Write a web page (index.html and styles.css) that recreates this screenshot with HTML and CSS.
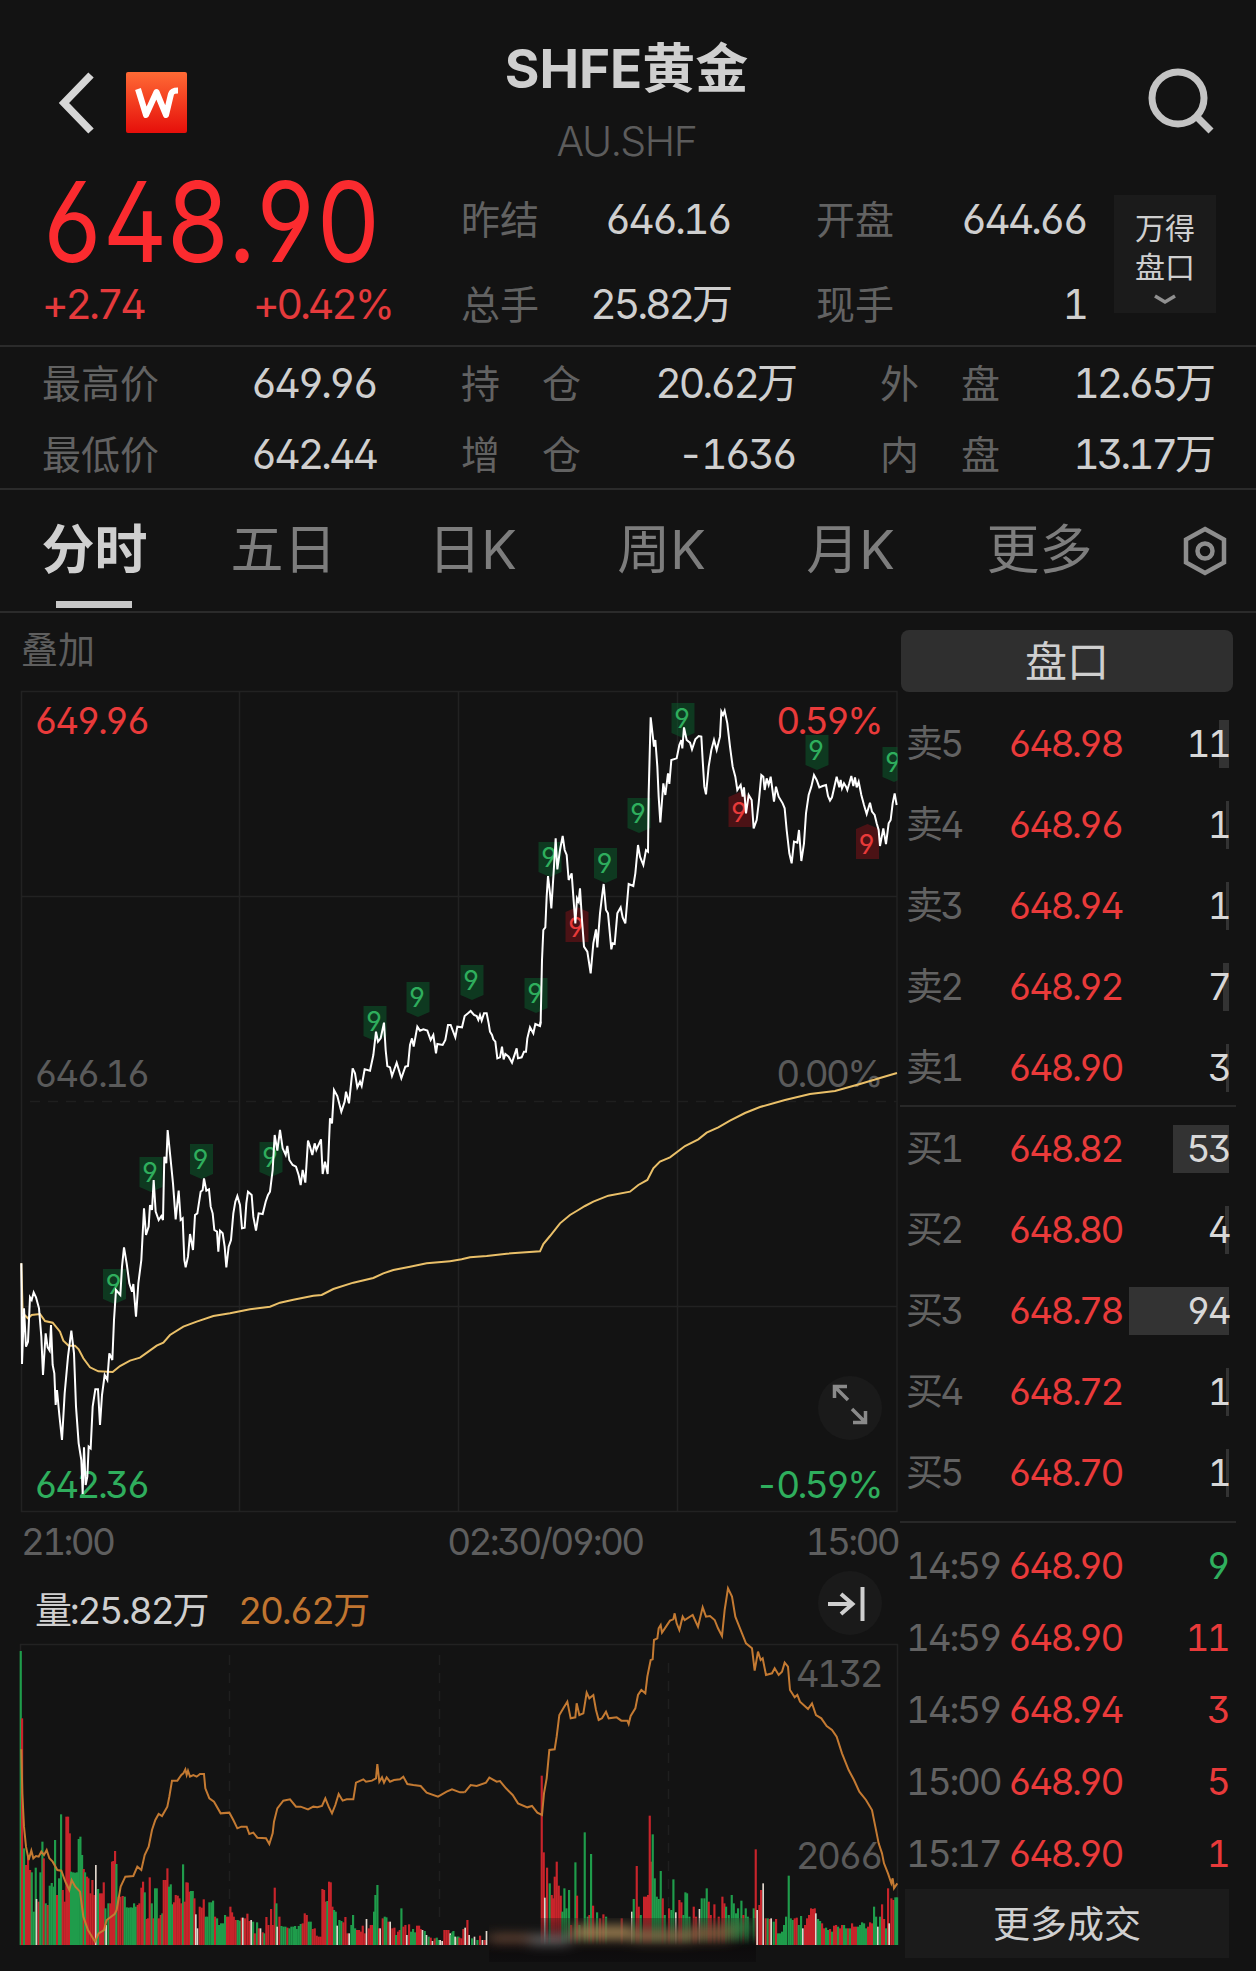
FILE: index.html
```html
<!DOCTYPE html>
<html lang="zh-CN">
<head>
    <meta charset="UTF-8">
    <meta name="viewport" content="width=device-width, initial-scale=1.0">
    <title>SHFE黄金</title>
    <link rel="stylesheet" href="styles.css">
</head>
<body>
    <header class="topbar">
        <div class="topbar-left">
            <svg class="back" width="36" height="62" viewBox="0 0 36 62"><path d="M33 3L6 31L33 59"/></svg>
            <svg class="logo" width="61" height="61" viewBox="0 0 61 61">
                <defs>
                    <linearGradient id="logoBg" x1="0" y1="0" x2="0" y2="1">
                        <stop offset="0" stop-color="#ff6a35"/>
                        <stop offset="1" stop-color="#e60f0a"/>
                    </linearGradient>
                </defs>
                <rect width="61" height="61" rx="2" fill="url(#logoBg)"/>
                <path d="M12 17L20 43L30.500 20L40 43L45 22Q46 18.500 52 18.500"/>
            </svg>
        </div>
        <div class="topbar-title">
            <h1>SHFE黄金</h1>
            <p>AU.SHF</p>
        </div>
        <svg class="search" width="70" height="70" viewBox="0 0 70 70"><circle cx="31" cy="31" r="26"/><path d="M50 50L64 64"/></svg>
    </header>

    <section class="quote">
        <div class="last">
            <div class="last-price">648.90</div>
            <div class="last-change"><span>+2.74</span><span>+0.42%</span></div>
        </div>
        <dl class="quote-col">
            <div><dt>昨结</dt><dd>646.16</dd></div>
            <div><dt>总手</dt><dd>25.82万</dd></div>
        </dl>
        <dl class="quote-col second">
            <div><dt>开盘</dt><dd>644.66</dd></div>
            <div><dt>现手</dt><dd>1</dd></div>
        </dl>
        <button class="wind">
            <span>万得</span>
            <span>盘口</span>
            <svg width="24" height="14" viewBox="0 0 24 14"><path d="M2 3L12 9L22 3"/></svg>
        </button>
    </section>

    <section class="stats">
        <dl class="stat-a">
            <div><dt>最高价</dt><dd>649.96</dd></div>
            <div><dt>最低价</dt><dd>642.44</dd></div>
        </dl>
        <dl class="stat-b">
            <div><dt><i>持</i><i>仓</i></dt><dd>20.62万</dd></div>
            <div><dt><i>增</i><i>仓</i></dt><dd>-1636</dd></div>
        </dl>
        <dl class="stat-c">
            <div><dt><i>外</i><i>盘</i></dt><dd>12.65万</dd></div>
            <div><dt><i>内</i><i>盘</i></dt><dd>13.17万</dd></div>
        </dl>
    </section>

    <nav class="tabs">
        <a class="active">分时</a>
        <a>五日</a>
        <a>日K</a>
        <a>周K</a>
        <a>月K</a>
        <a>更多</a>
        <svg width="44" height="50" viewBox="0 0 44 50"><path d="M22 3L41 13.500V36.500L22 47L3 36.500V13.500Z"/><circle cx="22" cy="25" r="7.500"/></svg>
    </nav>

    <main class="main">
        <div class="charts">
            <div class="overlay-label">叠加</div>

            <!-- 分时图 -->
            <svg class="price-chart" width="900" height="840" viewBox="0 680 900 840">
                <defs>
                    <clipPath id="plot"><rect x="20" y="690" width="877.500" height="824"/></clipPath>
                    <path id="down" d="M-11.500 0H11.500V30L0 35L-11.500 30Z"/>
                    <path id="up" d="M-11.500 35H11.500V5L0 0L-11.500 5Z"/>
                </defs>
                <g class="grid">
                    <path d="M21.500 691.500H897V1511.500H21.500ZM239.500 691.500V1511.500M458.500 691.500V1511.500M677.500 691.500V1511.500M21.500 896.500H897M21.500 1306.500H897"/>
                    <path class="dashed" d="M30 1101.500H897"/>
                </g>
                <g class="labels">
                    <text class="red" x="34" y="734">649.96</text>
                    <text class="grey" x="34" y="1087">646.16</text>
                    <text class="green" x="34" y="1498">642.36</text>
                    <text class="red end" x="881" y="734">0.59%</text>
                    <text class="grey end" x="881" y="1087">0.00%</text>
                    <text class="green end" x="881" y="1498">-0.59%</text>
                </g>
                <g id="marks" clip-path="url(#plot)"></g>
                <g class="avg">
                    <polyline transform="translate(0 1060) scale(.33333)" points="64,610 68,760 84,775 95,765 120,762 135,783 158,788 180,815 190,842 206,857 225,857 236,868 250,895 270,922 295,934 338,936 360,918 390,902 420,893 445,875 470,857 490,848 510,825 550,800 590,785 640,768 690,760 750,748 810,740 840,728 880,719 940,707 965,705 1000,687 1060,668 1120,654 1150,640 1180,630 1230,620 1280,610 1350,604"/>
                    <polyline transform="translate(330 930) scale(.33333)" points="360,994 395,988 420,982 470,978 530,971 630,964 640,942 660,918 690,880 720,855 745,840 765,828 790,815 835,797 900,785 925,765 952,750 970,715 990,695 1020,682 1065,648 1105,628 1130,608 1165,592 1200,572 1245,549 1290,531 1365,510 1440,492 1515,483 1590,462 1650,444 1701,429"/>
                </g>
                <g class="price">
                    <polyline transform="translate(0 1060) scale(.33333)" points="64,610 66,912 72,745 78,860 84,845 90,712 95,720 101,697 108,712 117,745 124,830 129,945 137,820 143,862 149,872 153,795 158,915 163,940 167,1035 171,990 178,1065 186,1140 194,1000 204,890 214,812 222,880 228,1040 236,1150 244,1200 248,1302 252,1162 257,1275 262,1250 266,1160 272,1165 278,1040 286,988 294,988 300,1095 306,1005 314,945 322,960 328,880 337,900 342,780 348,690 361,705 366,620 372,562 380,610 388,670 396,695 400,672 408,770 415,670 424,600 432,445 438,525 446,500 450,435 456,450 461,360 467,455 476,480 484,468 489,480 493,290 499,310 503,210 511,290 519,370 527,478 536,392 542,480 548,475 553,600 557,622 564,590 570,522 579,570 585,465 592,460 602,395 608,390 612,355 619,392 627,388 632,440 638,460 643,510 651,515 655,575 660,512 668,520 674,560 679,622 686,560 693,540 700,460 706,425 712,408 720,435 726,505 734,503 739,430 744,395 755,405 760,470 768,512 776,460 788,462 797,425 804,405 810,395 818,330 824,225 832,272 840,210 848,265 857,285 862,258 868,300 878,315 888,320 896,345 902,375 908,330 916,368 924,242 930,260 937,285 944,250 949,270 963,238 968,342 975,305 983,342 990,175 996,190 1002,90 1012,108 1024,155 1034,125 1038,95 1047,130 1058,25"/>
                    <polyline transform="translate(330 930) scale(.33333)" points="68,415 75,430 82,472 90,455 95,468 104,418 120,422 130,375 138,305 144,335 152,325 162,278 167,360 172,408 180,412 186,438 200,398 214,445 226,410 234,408 240,345 246,325 251,350 262,290 270,302 280,298 292,302 302,330 310,315 318,370 322,342 338,345 346,330 354,285 362,285 376,322 382,290 396,292 404,258 414,250 422,243 432,255 440,258 445,270 450,255 455,272 462,250 470,250 476,280 480,305 486,315 490,328 496,335 502,385 510,382 516,350 521,388 526,372 536,380 546,398 560,355 564,385 575,382 582,365 588,365 592,325 600,292 610,310 616,282 630,288 632,275"/>
                    <polyline transform="translate(500 680) scale(.33333)" points="120,1038 122,1025 126,840 130,750 136,742 140,650 144,588 150,640 154,685 162,560 167,475 172,568 180,510 188,468 194,510 200,525 206,600 215,580 220,650 226,730 231,655 236,665 240,625 246,720 252,800 262,815 272,880 280,790 288,748 292,802 300,700 306,650 311,612 318,690 324,700 334,808 338,790 344,792 352,700 362,682 368,712 376,730 386,612 400,618 406,580 414,495 420,530 430,555 438,510 444,515 446,340 452,112 462,200 466,180 472,260 476,350 481,427 490,310 496,345 504,280 508,312 514,240 530,235 538,195 544,180 547,205 552,142 560,180 570,188 576,208 586,178 596,168 604,170 608,240 613,320 618,343 626,260 634,210 642,180 650,210 660,170 664,95 669,105 674,92 682,130 690,200 698,260 706,290 712,330 722,315 728,350 732,322 738,400 746,345 755,360 761,445 770,420 776,370 784,285 790,290 794,330 800,295 806,315 812,290 822,365 828,320 836,350 848,370 854,385 860,450 868,520 875,550 882,485 892,488 897,450 904,543 912,490 918,400 926,345 934,320 942,285 950,300 958,322 968,318 978,315 984,348 990,362 996,352 1010,290 1018,322 1022,300 1026,325 1032,310 1038,320 1042,330 1048,310 1054,288 1060,318 1065,292 1070,322 1076,305 1084,345 1092,375 1100,402 1110,368 1116,395 1124,405 1130,430 1136,450 1140,498 1150,445 1158,492 1166,430 1172,420 1178,370 1184,340 1190,375"/>
                </g>
                <circle class="round" cx="850" cy="1408" r="32"/>
                <path class="expand" d="M848 1400L835 1387M834.500 1398V1386.500H847M852 1409L865 1422M865.500 1411V1422.500H853"/>
            </svg>

            <div class="time-axis"><span>21:00</span><span class="mid">02:30/09:00</span><span>15:00</span></div>

            <div class="volume-head">
                <span>量:25.82万</span>
                <span class="orange">20.62万</span>
                <svg width="66" height="66" viewBox="0 0 66 66"><circle class="round" cx="33" cy="33" r="32"/><path class="jump" d="M11 34H35M24 24L35.500 34L24 44"/><path class="jump-bar" d="M45.500 17V51"/></svg>
            </div>

            <!-- 成交量 + 持仓 -->
            <svg class="volume-chart" width="900" height="331" viewBox="0 1640 900 331">
                <defs>
                    <filter id="smear" x="-10%" y="-60%" width="120%" height="220%"><feGaussianBlur stdDeviation="7 6"/></filter>
                    <linearGradient id="fade" x1="0" y1="0" x2="0" y2="1">
                        <stop offset="0" stop-color="#131313" stop-opacity=".3"/>
                        <stop offset=".4" stop-color="#131211" stop-opacity=".65"/>
                        <stop offset=".62" stop-color="#0d0b0c"/>
                        <stop offset="1" stop-color="#0f0e0f"/>
                    </linearGradient>
                    <clipPath id="smearClip"><rect x="489" y="1918" width="267" height="44"/></clipPath>
                </defs>
                <g class="grid">
                    <path d="M20.500 1945V1644.500H897.500V1945"/>
                    <path class="dashed" d="M229.500 1655V1920M439.500 1655V1920M668.500 1663V1920"/>
                </g>
                <g class="labels">
                    <text class="grey end" x="881" y="1687">4132</text>
                    <text class="grey end" x="881" y="1869">2066</text>
                </g>
                <g id="bars" transform="translate(0 1945) scale(.33333 -.33333)"></g>
                <g clip-path="url(#smearClip)">
                    <rect x="489" y="1918" width="267" height="44" fill="url(#fade)"/>
                    <g filter="url(#smear)">
                        <rect x="489" y="1936" width="46" height="5" fill="#a06a50"/>
                        <rect x="530" y="1936" width="40" height="8" fill="#777"/>
                        <rect x="572" y="1926" width="60" height="13" fill="#a08253"/>
                        <rect x="632" y="1930" width="60" height="11" fill="#8c6f4c"/>
                        <rect x="692" y="1926" width="38" height="14" fill="#7e5a3c"/>
                        <rect x="730" y="1920" width="20" height="16" fill="#2d7a3f"/>
                    </g>
                </g>
                <polyline class="oi" transform="translate(0 1560) scale(.33333)" points="64,568 67,700 72,800 78,860 86,900 94,872 100,895 108,888 116,890 124,875 132,885 140,870 148,895 158,905 172,930 184,932 196,965 208,990 215,960 226,980 240,995 250,1070 264,1110 285,1145 296,1120 312,1110 320,1080 344,1062 350,1050 362,980 376,950 400,948 412,920 424,930 434,885 446,860 456,810 466,780 476,762 486,768 502,740 508,710 516,662 532,662 544,645 550,640 556,628 560,645 564,632 570,650 580,645 590,650 600,642 612,642 616,685 628,715 642,725 662,760 688,758 700,780 712,805 724,800 740,800 748,822 760,818 772,833 798,835 808,852 818,820 822,785 832,745 850,722 870,718 888,740 902,740 924,748 940,740 952,742 966,738 976,715 986,740 996,760 1006,735 1016,702 1028,722 1040,718 1060,718 1068,668 1090,658 1098,665 1116,662 1128,655 1132,612 1138,665 1146,652 1152,668 1160,652 1170,665 1182,660 1200,658 1210,650 1222,672 1240,675 1262,678 1280,698 1314,710 1340,695 1356,688 1380,697 1394,697"/>
                <polyline class="oi" transform="translate(450 1560) scale(.33333)" points="44,697 62,675 80,678 108,668 118,653 140,665 150,663 168,685 188,705 204,730 232,742 246,738 262,758 276,765 282,700 290,655 298,570 314,568 320,530 328,465 340,445 352,425 362,475 376,472 380,430 388,465 400,460 410,398 418,415 430,405 438,450 446,480 456,475 468,455 476,475 500,472 514,482 532,482 536,492 542,468 556,445 564,405 574,390 586,400 592,350 602,300 608,298 612,240 622,235 626,205 632,195 636,218 648,200 660,182 670,178 674,160 680,190 688,210 698,170 704,180 728,165 744,200 758,142 768,170 780,168 794,180 804,205 816,228 824,150 834,85 846,110 856,170 870,205 888,250 906,265 914,332 924,275 932,300 938,295 948,345 966,340 974,325 986,345 996,335 1004,308 1014,320 1020,390 1034,412 1042,405 1050,425 1074,447 1086,430 1098,465 1114,475 1130,498 1146,510 1160,530 1176,580 1196,630 1212,660 1228,695 1248,720 1266,750 1276,800 1286,850 1296,880 1302,910 1314,940 1324,970 1328,955 1332,985 1342,970"/>
            </svg>
        </div>

        <aside class="book">
            <div class="book-tab">盘口</div>
            <ul class="levels asks">
                <li><span>卖5</span><b>648.98</b><em>11<i style="width: 10px"></i></em></li>
                <li><span>卖4</span><b>648.96</b><em>1<i style="width: 3px"></i></em></li>
                <li><span>卖3</span><b>648.94</b><em>1<i style="width: 3px"></i></em></li>
                <li><span>卖2</span><b>648.92</b><em>7<i style="width: 6px"></i></em></li>
                <li><span>卖1</span><b>648.90</b><em>3<i style="width: 3px"></i></em></li>
            </ul>
            <ul class="levels bids">
                <li><span>买1</span><b>648.82</b><em>53<i style="width: 56px"></i></em></li>
                <li><span>买2</span><b>648.80</b><em>4<i style="width: 4px"></i></em></li>
                <li><span>买3</span><b>648.78</b><em>94<i style="width: 100px"></i></em></li>
                <li><span>买4</span><b>648.72</b><em>1<i style="width: 3px"></i></em></li>
                <li><span>买5</span><b>648.70</b><em>1<i style="width: 3px"></i></em></li>
            </ul>
            <ul class="trades">
                <li><span>14:59</span><b>648.90</b><em class="green">9</em></li>
                <li><span>14:59</span><b>648.90</b><em>11</em></li>
                <li><span>14:59</span><b>648.94</b><em>3</em></li>
                <li><span>15:00</span><b>648.90</b><em>5</em></li>
                <li><span>15:17</span><b>648.90</b><em>1</em></li>
            </ul>
            <button class="more">更多成交</button>
        </aside>
    </main>

    <script src="script.js"></script>
</body>
</html>
```
FILE: styles.css
```css
* {
    margin: 0;
    padding: 0;
    box-sizing: border-box;
}

body {
    width: 1256px;
    height: 1971px;
    overflow: hidden;
    background-color: #131313;
    color: #cfcfcf;
    font-family: Inter, "Noto Sans CJK SC", sans-serif;
    font-feature-settings: "tnum", "ss01";
    font-size: 41px;
    letter-spacing: -3.1px;
}

svg {
    display: block;
    fill: none;
}

button {
    border: none;
    font: inherit;
    letter-spacing: 0;
    color: inherit;
}

ul {
    list-style: none;
}

i, em, b {
    font-style: normal;
    font-weight: inherit;
}

.red {
    fill: #e93a3a;
}

.grey {
    fill: #5a5a5a;
}

.green {
    fill: #2fae5d;
}

/* 顶部 */
.topbar {
    display: flex;
    justify-content: space-between;
    height: 170px;
    padding: 0 39px 0 58px;
}

.topbar-left {
    display: flex;
    gap: 32px;
    width: 158px;
    padding-top: 72px;
}

.back path {
    stroke: #d6d6d6;
    stroke-width: 7.5;
}

.logo path {
    stroke: #fff;
    stroke-width: 6;
    stroke-linejoin: round;
}

.topbar-title {
    padding-top: 36px;
    text-align: center;
}

.topbar-title h1 {
    font-size: 53px;
    font-weight: 700;
    line-height: 66px;
    letter-spacing: 0;
}

.topbar-title p {
    padding-top: 14px;
    color: #5c5c5c;
    line-height: 50px;
    font-weight: 300;
    letter-spacing: -1.4px;
}

.search {
    margin: 67px 0 0 110px;
    stroke: #c4c4c4;
    stroke-width: 7;
}

/* 报价 */
.quote {
    display: flex;
    height: 177px;
    padding-left: 42px;
    border-bottom: 2px solid #2b2b2b;
}

.last {
    width: 419px;
    color: #fb2b2f;
}

.last-price {
    height: 91px;
    padding-top: 6px;
    font-size: 111px;
    line-height: 91px;
    letter-spacing: -2.2px;
    transform: scaleX(.9);
    transform-origin: -20px 0;
}

.last-change {
    display: flex;
    justify-content: space-between;
    width: 350px;
    padding-top: 18px;
    line-height: 50px;
    color: #e53a3c;
}

.quote-col {
    width: 269px;
    padding-top: 7px;
}

.quote-col.second {
    width: 270px;
    margin-left: 86px;
}

.quote-col div, .stats dl div {
    display: flex;
    justify-content: space-between;
    height: 85px;
    line-height: 85px;
}

dt {
    color: #626262;
    font-size: 39px;
    letter-spacing: 0;
}

.wind {
    display: flex;
    flex-direction: column;
    align-items: center;
    width: 102px;
    height: 118px;
    margin: 25px 0 0 28px;
    padding-top: 14px;
    background-color: #1b1b1b;
    font-size: 30px;
    line-height: 39px;
}

.wind svg {
    margin-top: 6px;
    stroke: #909090;
    stroke-width: 3.5;
}

.stats {
    display: flex;
    height: 143px;
    padding: 1px 42px 0;
    border-bottom: 2px solid #2b2b2b;
}

.stats dl div {
    height: 71px;
    line-height: 71px;
}

.stats dt i + i {
    margin-left: 42px;
}

.stat-a {
    width: 334px;
}

.stat-b {
    width: 334px;
    margin-left: 85px;
}

.stat-c {
    width: 333px;
    margin-left: 85px;
}

/* 周期 */
.tabs {
    display: flex;
    align-items: center;
    height: 123px;
    border-bottom: 2px solid #2b2b2b;
    color: #7d7d7d;
    font-size: 53px;
    letter-spacing: 0;
}

.tabs a {
    width: 189px;
    line-height: 121px;
    text-align: center;
}

.tabs .active {
    position: relative;
    color: #cfcfcf;
    font-weight: 700;
}

.tabs .active::after {
    content: "";
    position: absolute;
    left: 56px;
    bottom: 3px;
    width: 76px;
    height: 7px;
    background-color: #c8c8c8;
}

.tabs svg {
    margin-left: 49px;
    stroke: #8d8d8d;
    stroke-width: 4.5;
}

.main {
    display: flex;
    font-size: 37px;
    letter-spacing: -2.7px;
}

.charts {
    width: 900px;
}

.overlay-label {
    height: 67px;
    padding-left: 21px;
    line-height: 76px;
    color: #5e5e5e;
    letter-spacing: 0;
}

.grid path {
    stroke: #222;
    stroke-width: 1.5;
}

.grid .dashed {
    stroke: #1f1f1f;
    stroke-dasharray: 10 8;
}

.labels text {
    font-size: 37px;
}

.labels .end {
    text-anchor: end;
}

.price polyline, .avg polyline, .oi {
    vector-effect: non-scaling-stroke;
    stroke-width: 2;
}

.price polyline {
    stroke: #fff;
}

.avg polyline {
    stroke: #eac069;
}

.oi {
    stroke: #c47a32;
}

.mark-box {
    fill: #0b5a2b;
    fill-opacity: .55;
}

.mark-box.up {
    fill: #7a1218;
}

.mark {
    font-size: 27px;
    text-anchor: middle;
    letter-spacing: 0;
}

.round {
    fill: #1a1a1a;
}

.expand {
    stroke: #8a8a8a;
    stroke-width: 3.5;
}

.time-axis {
    display: flex;
    height: 43px;
    padding: 0 2px 0 21px;
    line-height: 43px;
    color: #5e5e5e;
}

.time-axis .mid {
    margin: 0 163px 0 auto;
}

.volume-head {
    display: flex;
    align-items: center;
    height: 77px;
    padding: 12px 17px 0 35px;
    letter-spacing: -2.2px;
}

.volume-head .orange {
    margin-left: 31px;
    color: #c07530;
}

.volume-head svg {
    margin: -10px 0 0 auto;
}

.jump, .jump-bar {
    stroke: #cfcfcf;
    stroke-width: 4;
}

.volume-chart {
    overflow: visible;
}

/* 盘口 */
.book {
    width: 340px;
    padding-top: 17px;
}

.book-tab {
    width: 332px;
    height: 62px;
    margin-left: 1px;
    border-radius: 8px;
    background-color: #2f2f2f;
    text-align: center;
    font-size: 42px;
    line-height: 63px;
    letter-spacing: 0;
}

.levels {
    width: 336px;
    border-bottom: 2px solid #282828;
}

.asks {
    height: 415px;
    padding-top: 11px;
}

.bids {
    height: 416px;
    padding-top: 1px;
}

.levels li, .trades li {
    display: flex;
    height: 81px;
    padding: 0 7px 0 6px;
    line-height: 81px;
}

.levels span, .trades span {
    width: 102px;
    color: #626262;
}

.trades span {
    letter-spacing: -2.3px;
}

.levels b, .trades b {
    color: #e93a3a;
}

.levels em {
    position: relative;
    z-index: 0;
    flex: 1;
    text-align: right;
    color: #d8d8d8;
}

.levels em i {
    position: absolute;
    z-index: -1;
    right: 0;
    top: 17px;
    height: 48px;
    background-color: #333;
}

.trades {
    height: 366px;
    padding-top: 7px;
}

.trades li {
    height: 72px;
    line-height: 72px;
}

.trades em {
    flex: 1;
    padding-right: 5px;
    text-align: right;
    color: #e93a3a;
}

.trades .green {
    color: #2fae5d;
}

.more {
    width: 324px;
    height: 69px;
    margin-left: 5px;
    padding-bottom: 3px;
    background-color: #1b1b1b;
}
```
FILE: script.js
```js
const NS = "http://www.w3.org/2000/svg";

function add(parent, tag, attrs, text) {
    const el = document.createElementNS(NS, tag);
    for (const key in attrs) el.setAttribute(key, attrs[key]);
    if (text) el.textContent = text;
    parent.appendChild(el);
}

// 九转标记: x, y
const sell = [[114.5, 1269], [151, 1157], [201.5, 1144], [271, 1142], [375, 1006], [418, 982], [472, 965], [536, 978], [550, 842], [605.5, 848], [639, 798], [683, 703], [817, 735], [894, 747]];
const buy = [[577, 907], [740, 792], [867.5, 824]];
const marks = document.getElementById("marks");

sell.forEach(([x, y]) => {
    add(marks, "use", { href: "#down", class: "mark-box", x, y });
    add(marks, "text", { class: "mark green", x: x - 1, y: y + 25 }, "9");
});
buy.forEach(([x, y]) => {
    add(marks, "use", { href: "#up", class: "mark-box up", x, y });
    add(marks, "text", { class: "mark red", x: x - 1, y: y + 30 }, "9");
});

// 成交量: 位置 + 颜色 + 高度
const morning = "62g882 66r680 72g290 78r240 84r270 90r225 95g218 101g100 107g232 116r130 110w138 121g218 127g310 131r260 137g125 143r120 149g178 155g186 161g175 165g315 171r150 177g200 183g392 188r165 194r130 199r385 204r385 209r335 213g220 219g218 225g217 231g218 236g318 241g325 246g270 251r228 255g218 261r205 265r200 271r155 277r195 283r150 288w240 294g168 300r155 306r155 311r188 316g110 319w60 325g125 331r125 336r250 340r252 345r282 349g243 355r145 361r145 368r147 374g145 380g113 386g112 392g113 397g112 402g125 407g115 413r120 418r125 424r172 429r190 434g158 440r78 444r80 449r203 455g125 460r80 465g170 470g170 476r80 482r90 487g95 491r195 497r195 502r230 507g175 512g182 517g122 522r128 527r150 533r148 538r140 544r125 549g242 554r130 559r188 563r187 568r160 573g162 578g162 583r140 588w92 593w50 599r115 605r112 611r137 617g85 622g85 628g128 634g128 639g133 645r85 651g80 657g60 663g65 669g65 675g90 681r85 686r85 691r115 696r98 701r85 707r75 713g75 719g73 725r82 729w82 735r80 742r94 748r72 754w75 759g70 764r35 771g68 776r50 782w50 788r38 793g35 799r84 805r60 813r108 818r60 824r172 829g125 832w55 838r85 844g57 850g55 856g55 862r52 868g50 874g55 880g55 885g57 890g48 896g57 902g63 908r65 914r95 920r90 926g70 932g70 938r48 944r50 950r28 956r25 962r25 967r168 972r165 977r130 982g132 987r190 992r188 997r115 1002g105 1007g100 1012w58 1018g75 1024g72 1030r68 1036r84 1042r35 1048w35 1054g60 1059g90 1065g50 1071r45 1077r45 1083r40 1088r58 1094r35 1100w78 1106r50 1112r60 1117r60 1122g100 1126g150 1132g180 1137r50 1141w50 1148r80 1154g85 1159g83 1165r70 1171w70 1177r50 1183r52 1188g30 1194r40 1199r45 1204g110 1210r55 1216r60 1221w30 1227r62 1233g40 1239g48 1245g38 1251r58 1257r58 1262r48 1268w45 1274g42 1280w30 1286g25 1292r22 1298w12 1304r20 1310g22 1316g15 1321w15 1327w12 1333r45 1339r45 1345r45 1351w35 1357g38 1363g25 1369r22 1375g25";
const afternoon = "4g30 10g42 16w25 22g25 28r22 34r20 40r48 46w52 52r75 58w30 66g20 74w25 82g15 90r28 98w15 104r15 110w42 275r508 281r278 285w142 291r232 299g185 305r150 309r140 314r205 320r250 326r178 332r148 337g100 343g170 349g110 357g165 363r60 376g248 381r148 388g60 404g338 413g85 418r90 423g273 429r118 441g98 450r80 460r92 468g85 515r80 546w100 551g138 560r237 566r115 572g90 582r145 588r145 594r150 599r388 604r250 608g332 614g200 620g145 626g138 632g222 638r140 644g90 657r110 664g105 670g197 678w98 688r135 694r128 700g90 706g158 711g155 718g85 731r115 738r85 749w108 755g140 763g140 770g170 776r130 782r90 793r122 806r85 817r145 823r125 828g115 836g90 845g150 851g125 858g95 864g110 874g133 880r90 887g110 893g85 911g110 917r287 922w105 928r120 933r165 940w185 947r80 953g80 959r78 964w80 971g70 978r78 984g35 990g35 996g40 1002g60 1008g85 1016g208 1022g80 1028g75 1034r80 1040r82 1046g60 1053g87 1059w50 1065r60 1071r80 1077r90 1083r110 1089r108 1094r110 1098w95 1104g78 1110g72 1116r65 1122r50 1128g52 1134g45 1140r48 1146g40 1152r58 1158r60 1164g55 1170r50 1176r60 1182g60 1188g50 1194r50 1200g50 1206r65 1212r55 1218r55 1224g55 1230g60 1236g68 1242g65 1248g50 1254r55 1260r68 1266r65 1272g115 1278g85 1284w55 1290g85 1296r122 1302r78 1308g50 1314r170 1318w65 1324r140 1330r135 1336g143 1341g143";
const colors = { r: "#c8242b", g: "#1f9c4b", w: "#e0d6cc" };
const bars = document.getElementById("bars");

function drawBars(list, offset) {
    list.split(" ").forEach(item => {
        const [, x, c, h] = item.match(/(\d+)([rgw])(\d+)/);
        add(bars, "rect", { x: offset + Number(x) - 3, y: 0, width: c === "w" ? 5 : 6.5, height: h, fill: colors[c] });
    });
}

drawBars(morning, 0);
drawBars(afternoon, 1350);
```
